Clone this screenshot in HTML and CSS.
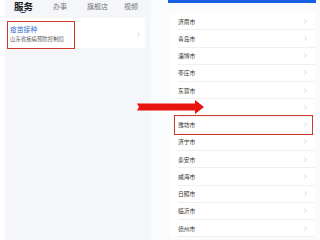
FILE: index.html
```html
<!DOCTYPE html>
<html lang="zh-CN">
<head>
<meta charset="utf-8">
<link rel="stylesheet" href="styles.css">
</head>
<body>
<div class="page">
  <section class="left">
    <nav class="tabs">
      <div class="tab active">服务<span class="under"></span></div>
      <div class="tab">办事</div>
      <div class="tab">旗舰店</div>
      <div class="tab last">视频</div>
    </nav>
    <div class="card">
      <div class="card-text">
        <div class="card-title">疫苗接种</div>
        <div class="card-sub">山东省疾病预防控制局</div>
      </div>
      <svg class="chev" width="3" height="5" viewBox="0 0 3 5"><path d="M0.5 0.5 L2.5 2.5 L0.5 4.5" fill="none" stroke="#c8c8c8" stroke-width="0.8"/></svg>
      <div class="mark mark-card"></div>
    </div>
  </section>
  <section class="right">
    <div class="bluebar"></div>
    <ul class="list">
      <li class="row"><span>济南市</span><svg class="chev" width="3" height="5" viewBox="0 0 3 5"><path d="M0.5 0.5 L2.5 2.5 L0.5 4.5" fill="none" stroke="#c8c8c8" stroke-width="0.8"/></svg></li>
      <li class="row"><span>青岛市</span><svg class="chev" width="3" height="5" viewBox="0 0 3 5"><path d="M0.5 0.5 L2.5 2.5 L0.5 4.5" fill="none" stroke="#c8c8c8" stroke-width="0.8"/></svg></li>
      <li class="row"><span>淄博市</span><svg class="chev" width="3" height="5" viewBox="0 0 3 5"><path d="M0.5 0.5 L2.5 2.5 L0.5 4.5" fill="none" stroke="#c8c8c8" stroke-width="0.8"/></svg></li>
      <li class="row"><span>枣庄市</span><svg class="chev" width="3" height="5" viewBox="0 0 3 5"><path d="M0.5 0.5 L2.5 2.5 L0.5 4.5" fill="none" stroke="#c8c8c8" stroke-width="0.8"/></svg></li>
      <li class="row"><span>东营市</span><svg class="chev" width="3" height="5" viewBox="0 0 3 5"><path d="M0.5 0.5 L2.5 2.5 L0.5 4.5" fill="none" stroke="#c8c8c8" stroke-width="0.8"/></svg></li>
      <li class="row"><span></span><svg class="chev" width="3" height="5" viewBox="0 0 3 5"><path d="M0.5 0.5 L2.5 2.5 L0.5 4.5" fill="none" stroke="#c8c8c8" stroke-width="0.8"/></svg></li>
      <li class="row"><span>潍坊市</span><svg class="chev" width="3" height="5" viewBox="0 0 3 5"><path d="M0.5 0.5 L2.5 2.5 L0.5 4.5" fill="none" stroke="#c8c8c8" stroke-width="0.8"/></svg><div class="mark mark-row"></div></li>
      <li class="row"><span>济宁市</span><svg class="chev" width="3" height="5" viewBox="0 0 3 5"><path d="M0.5 0.5 L2.5 2.5 L0.5 4.5" fill="none" stroke="#c8c8c8" stroke-width="0.8"/></svg></li>
      <li class="row"><span>泰安市</span><svg class="chev" width="3" height="5" viewBox="0 0 3 5"><path d="M0.5 0.5 L2.5 2.5 L0.5 4.5" fill="none" stroke="#c8c8c8" stroke-width="0.8"/></svg></li>
      <li class="row"><span>威海市</span><svg class="chev" width="3" height="5" viewBox="0 0 3 5"><path d="M0.5 0.5 L2.5 2.5 L0.5 4.5" fill="none" stroke="#c8c8c8" stroke-width="0.8"/></svg></li>
      <li class="row"><span>日照市</span><svg class="chev" width="3" height="5" viewBox="0 0 3 5"><path d="M0.5 0.5 L2.5 2.5 L0.5 4.5" fill="none" stroke="#c8c8c8" stroke-width="0.8"/></svg></li>
      <li class="row"><span>临沂市</span><svg class="chev" width="3" height="5" viewBox="0 0 3 5"><path d="M0.5 0.5 L2.5 2.5 L0.5 4.5" fill="none" stroke="#c8c8c8" stroke-width="0.8"/></svg></li>
      <li class="row"><span>德州市</span><svg class="chev" width="3" height="5" viewBox="0 0 3 5"><path d="M0.5 0.5 L2.5 2.5 L0.5 4.5" fill="none" stroke="#c8c8c8" stroke-width="0.8"/></svg></li>
    </ul>
  </section>
  <svg class="arrow" width="68" height="14" viewBox="0 0 68 14"><polygon points="0,3.5 58,3.5 58,0 67,7 58,14 58,10.5 0,10.5 2,7" fill="#e8140e"/></svg>
</div>
</body>
</html>
```
FILE: styles.css
```css
* { box-sizing: border-box; }
html, body { margin: 0; padding: 0; background: #ffffff; }
body {
  font-family: "Noto Sans CJK SC", "Noto Sans", sans-serif;
  width: 320px;
  height: 240px;
  overflow: hidden;
}
.page {
  position: relative;
  display: flex;
  width: 320px;
  height: 240px;
}
.left {
  margin-left: 5px;
  width: 145px;
  height: 240px;
  background: #f5f6fa;
}
.tabs {
  display: flex;
  align-items: center;
  height: 12px;
  padding-left: 9px;
  gap: 20px;
}
.tab {
  position: relative;
  font-size: 7px;
  line-height: 11px;
  color: #777;
}
.tab.active {
  font-size: 9.5px;
  font-weight: 700;
  color: #1a1a1a;
}
.tab.last { margin-left: -4px; }
.under {
  position: absolute;
  left: 6px;
  top: 10.5px;
  width: 6px;
  height: 2px;
  border-bottom: 1.5px solid #2b3f6a;
  border-radius: 0 0 4px 4px;
}
.card {
  position: relative;
  display: flex;
  align-items: center;
  justify-content: space-between;
  margin-top: 6px;
  width: 140px;
  height: 30px;
  padding: 2px 5px 0;
  background: #ffffff;
}
.card-title {
  font-size: 6.8px;
  line-height: 9px;
  color: #3a6fd0;
}
.card-sub {
  font-size: 5.4px;
  line-height: 8px;
  color: #555;
  margin-top: 1px;
}
.chev { display: block; flex: none; }
.mark {
  position: absolute;
  border: 1.6px solid #cc3a2c;
  pointer-events: none;
}
.mark-card {
  left: 2px;
  top: 3px;
  width: 68px;
  height: 28px;
}
.right {
  flex: 1;
  height: 240px;
  padding-left: 18px;
  padding-right: 4px;
  background: #fafbfc;
}
.bluebar {
  height: 3px;
  background: #1760e6;
}
.list {
  list-style: none;
  margin: 10px 1px 0 2px;
  padding: 0;
  background: #ffffff;
}
.row {
  position: relative;
  display: flex;
  align-items: center;
  justify-content: space-between;
  height: 17.25px;
  margin-left: 8px;
  padding-right: 8px;
  border-bottom: 1px solid #f0f0f0;
  font-size: 5.8px;
  color: #333;
}
.mark-row {
  left: -4px;
  right: 2px;
  top: -1.5px;
  height: 20px;
}
.arrow {
  position: absolute;
  left: 137px;
  top: 100px;
}
```
